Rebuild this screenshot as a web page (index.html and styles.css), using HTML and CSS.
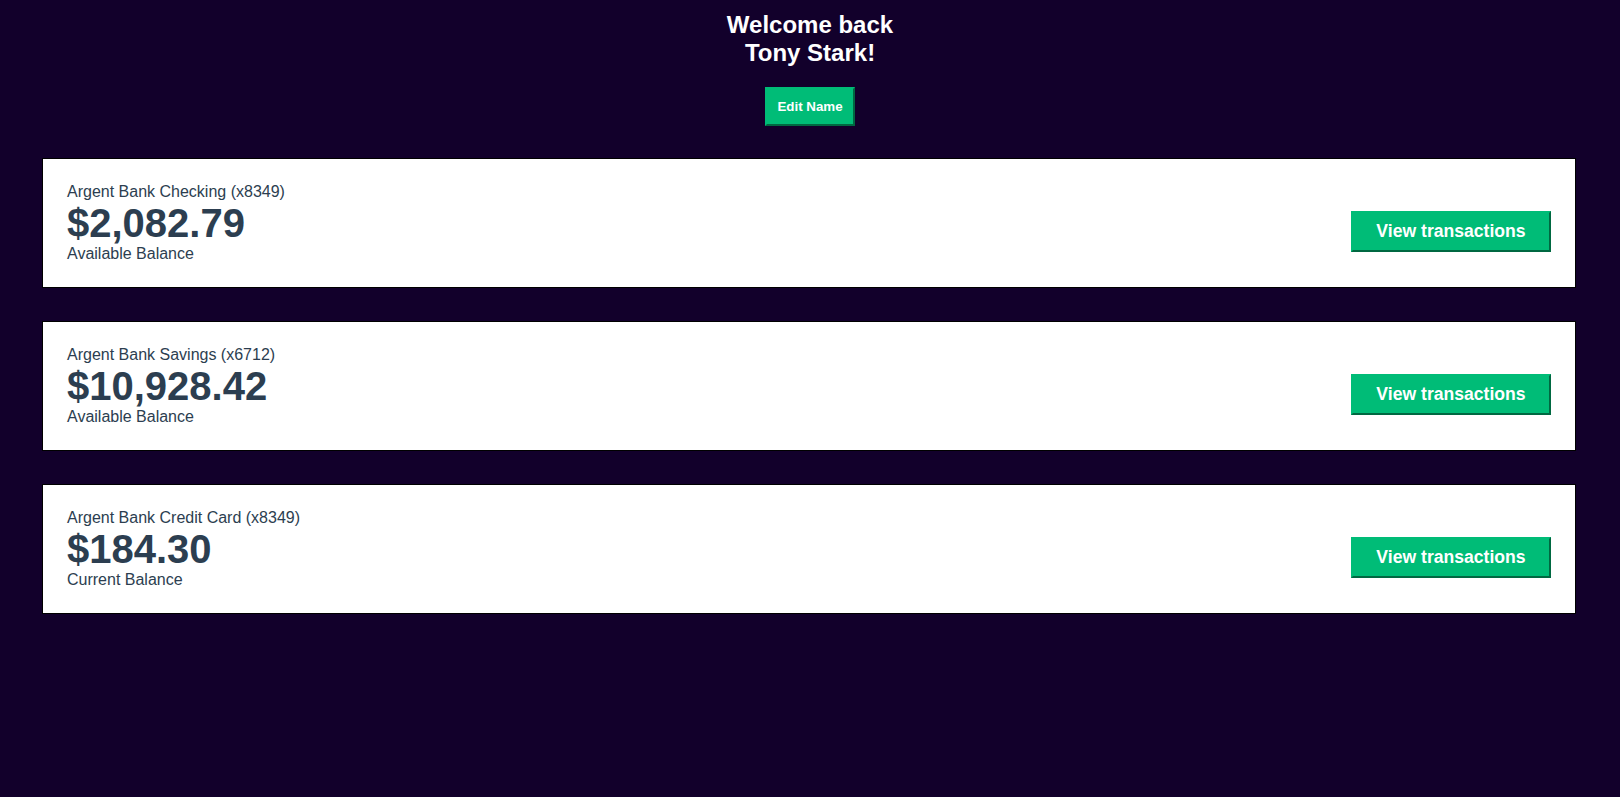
FILE: index.html
```html
<!DOCTYPE html>
<html lang="en">
<head>
<meta charset="utf-8">
<title>Argent Bank - User Page</title>
<link rel="stylesheet" href="styles.css">
</head>
<body>
<main class="main">
  <div class="header">
    <h1 class="header-title">Welcome back<br>Tony Stark!</h1>
    <button class="edit-button">Edit Name</button>
  </div>
  <section class="account">
    <div class="account-wrapper">
      <h3 class="account-title">Argent Bank Checking (x8349)</h3>
      <p class="account-amount">$2,082.79</p>
      <p class="account-amount-description">Available Balance</p>
    </div>
    <div class="account-wrapper cta">
      <button class="transaction-button">View transactions</button>
    </div>
  </section>
  <section class="account">
    <div class="account-wrapper">
      <h3 class="account-title">Argent Bank Savings (x6712)</h3>
      <p class="account-amount">$10,928.42</p>
      <p class="account-amount-description">Available Balance</p>
    </div>
    <div class="account-wrapper cta">
      <button class="transaction-button">View transactions</button>
    </div>
  </section>
  <section class="account">
    <div class="account-wrapper">
      <h3 class="account-title">Argent Bank Credit Card (x8349)</h3>
      <p class="account-amount">$184.30</p>
      <p class="account-amount-description">Current Balance</p>
    </div>
    <div class="account-wrapper cta">
      <button class="transaction-button">View transactions</button>
    </div>
  </section>
</main>
</body>
</html>
```
FILE: styles.css
```css
html, body {
  margin: 0;
  padding: 0;
}
body {
  background-color: #12002b;
  font-family: "Liberation Sans", Arial, Helvetica, sans-serif;
  color: #2c3e50;
  min-height: 797px;
}
.main {
  padding-top: 11px;
}
.header {
  color: #fff;
  text-align: center;
  margin-bottom: 32px;
}
.header-title {
  margin: 0 0 20px;
  font-size: 24px;
  line-height: 28px;
  font-weight: bold;
}
.edit-button {
  font-family: "Liberation Sans", Arial, sans-serif;
  font-size: 13.33px;
  line-height: 15px;
  border: 2px outset #00bc77;
  background-color: #00bc77;
  color: #fff;
  font-weight: bold;
  padding: 10px;
}
.account {
  display: flex;
  justify-content: space-between;
  align-items: center;
  border: 1px solid #000;
  background-color: #fff;
  margin: 0 44px 33px 42px;
  padding: 24px;
  box-sizing: border-box;
  text-align: left;
}
.account-wrapper {
  flex: 1;
}
.account-wrapper.cta {
  flex: 0 0 auto;
}
.account-title {
  margin: 0;
  padding: 0;
  font-size: 16px;
  line-height: 18px;
  font-weight: normal;
}
.account-amount {
  margin: 0;
  font-size: 40px;
  font-weight: bold;
  line-height: 44px;
}
.account-amount-description {
  margin: 0;
  font-size: 16px;
  line-height: 18px;
}
.transaction-button {
  display: block;
  width: 200px;
  padding: 8px;
  font-family: "Liberation Sans", Arial, sans-serif;
  font-size: 17.6px;
  font-weight: bold;
  margin-top: 16px;
  border: 2px outset #00bc77;
  background-color: #00bc77;
  color: #fff;
}
```
